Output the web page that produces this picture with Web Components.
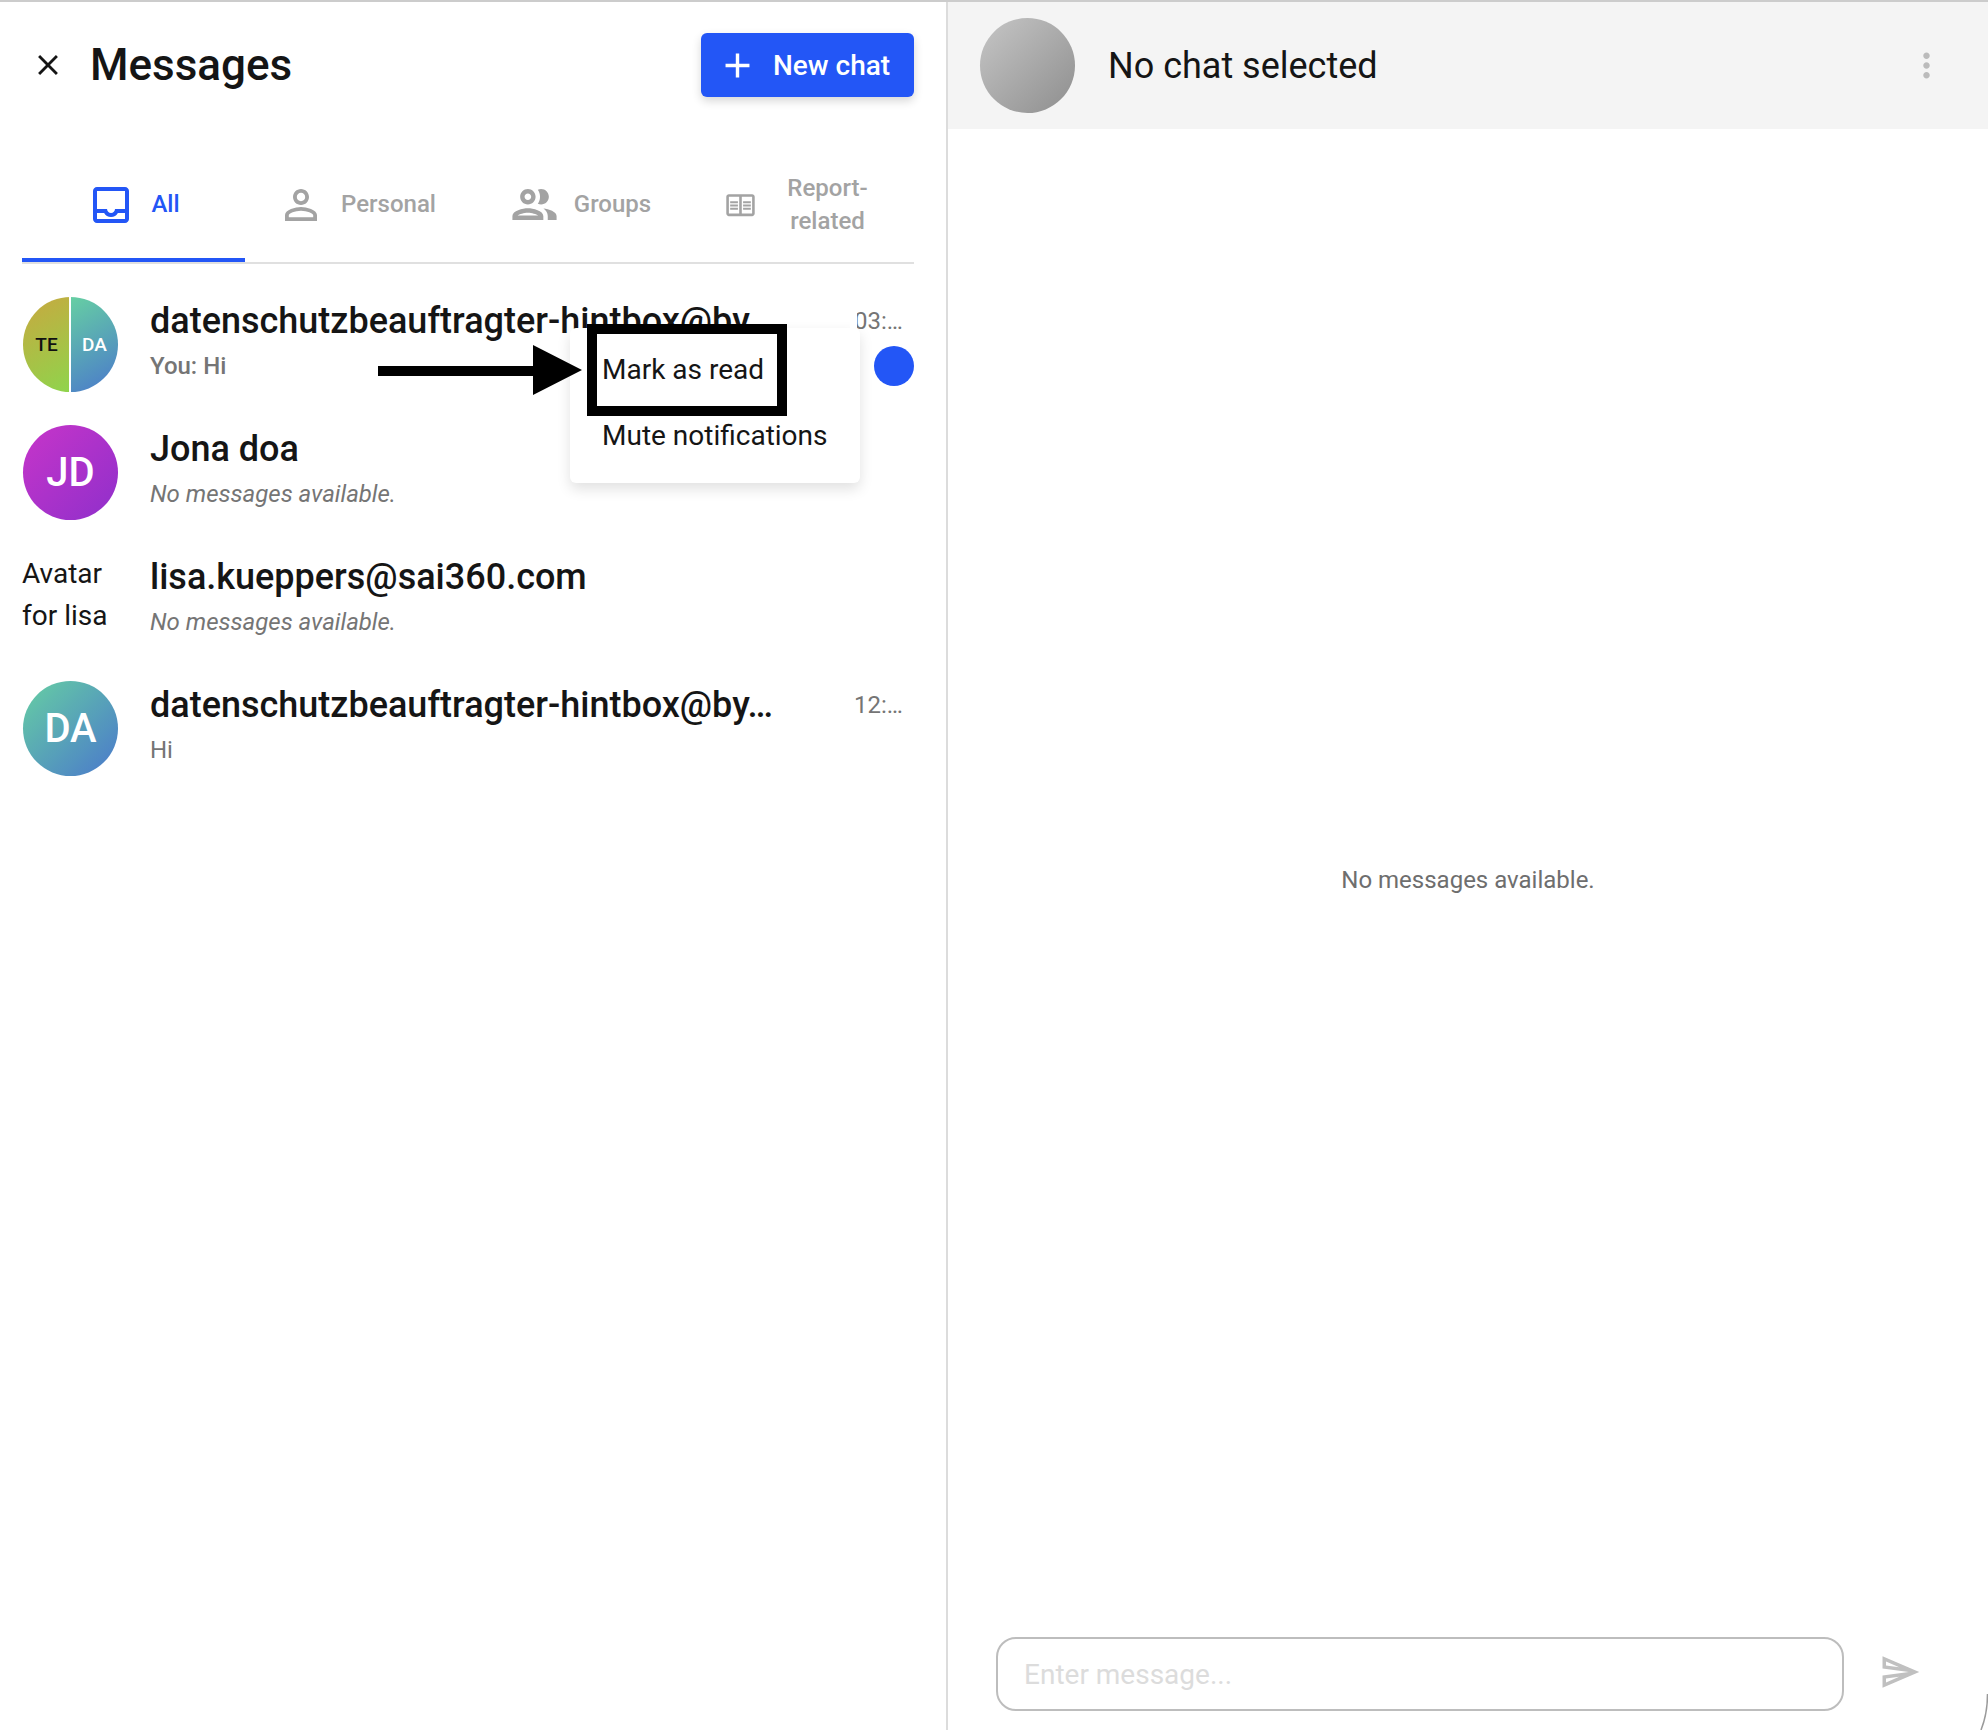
<!DOCTYPE html>
<html>
<head>
<meta charset="utf-8">
<style>
  html, body { margin: 0; height: 100%; background: #fff; }
  body { font-family: Roboto, "Liberation Sans", sans-serif; overflow: hidden; }
</style>
</head>
<body>
<chat-app>
  <chat-sidebar slot="left">
    <tab-item active label="All" size="48" d="M19 3H5c-1.1 0-2 .9-2 2v14c0 1.1.9 2 2 2h14c1.1 0 2-.9 2-2V5c0-1.1-.9-2-2-2zm0 16H5v-3h3.56c.69 1.19 1.97 2 3.45 2s2.75-.81 3.44-2H19v3zm0-5h-4.99c0 1.1-.9 2-2 2s-2-.9-2-2H5V5h14v9z" slot="tabs"></tab-item>
    <tab-item label="Personal" size="48" d="M12 5.9c1.16 0 2.1.94 2.1 2.1s-.94 2.1-2.1 2.1S9.9 9.16 9.9 8s.94-2.1 2.1-2.1m0 9c2.97 0 6.1 1.46 6.1 2.1v1.1H5.9V17c0-.64 3.13-2.1 6.1-2.1M12 4C9.79 4 8 5.79 8 8s1.79 4 4 4 4-1.79 4-4-1.79-4-4-4zm0 9c-2.67 0-8 1.34-8 4v3h16v-3c0-2.66-5.33-4-8-4z" slot="tabs"></tab-item>
    <tab-item label="Groups" size="53" d="M9 13.75c-2.34 0-7 1.17-7 3.5V19h14v-1.75c0-2.33-4.66-3.5-7-3.5zM4.34 17c.84-.58 2.87-1.25 4.66-1.25s3.82.67 4.66 1.25H4.34zM9 12c1.93 0 3.5-1.57 3.5-3.5S10.93 5 9 5 5.5 6.57 5.5 8.5 7.07 12 9 12zm0-5c.83 0 1.5.67 1.5 1.5S9.83 10 9 10s-1.5-.67-1.5-1.5S8.17 7 9 7zm7.04 6.81c1.16.84 1.96 1.96 1.96 3.44V19h4v-1.75c0-2.02-3.5-3.17-5.96-3.44zM15 12c1.93 0 3.5-1.57 3.5-3.5S16.93 5 15 5c-.54 0-1.04.13-1.5.35.63.89 1 1.98 1 3.15s-.37 2.26-1 3.15c.46.22.96.35 1.5.35z" slot="tabs"></tab-item>
    <tab-item label="Report-related" size="31" d="M21 4H3c-1.1 0-2 .9-2 2v13c0 1.1.9 2 2 2h18c1.1 0 2-.9 2-2V6c0-1.1-.9-2-2-2zM3 19V6h8v13H3zm18 0h-8V6h8v13zm-7-9.5h6V11h-6zm0 2.5h6v1.5h-6zm0 2.5h6V16h-6zM4 9.5h6V11H4zm0 2.5h6v1.5H4zm0 2.5h6V16H4z" slot="tabs"></tab-item>

    <chat-row slot="rows" name="datenschutzbeauftragter-hintbox@by…" sub="You: Hi" time="03:…" unread bold-sub>
      <chat-avatar slot="avatar" split></chat-avatar>
    </chat-row>
    <chat-row slot="rows" name="Jona doa" sub="No messages available." empty>
      <chat-avatar slot="avatar" initials="JD" colors="#c735c9,#8f2fcb"></chat-avatar>
    </chat-row>
    <chat-row slot="rows" name="lisa.kueppers@sai360.com" sub="No messages available." empty>
      <chat-avatar slot="avatar" alt="Avatar for lisa"></chat-avatar>
    </chat-row>
    <chat-row slot="rows" name="datenschutzbeauftragter-hintbox@by…" sub="Hi" time="12:…">
      <chat-avatar slot="avatar" initials="DA" colors="#66cfa3,#4a78cc"></chat-avatar>
    </chat-row>

    <row-menu slot="overlay"></row-menu>
    <menu-callout slot="overlay"></menu-callout>
  </chat-sidebar>
  <chat-panel slot="right"></chat-panel>
</chat-app>

<script>
class ChatApp extends HTMLElement {
  constructor() {
    super();
    this.attachShadow({ mode: 'open' });
    this.shadowRoot.innerHTML = `
      <style>
        :host { display: grid; grid-template-columns: 946px 1fr; height: 1730px; border-top: 2px solid #ccc; box-sizing: border-box; position: relative; }
        .corner { position: absolute; right: 0; bottom: 0; }
      </style>
      <slot name="left"></slot>
      <slot name="right"></slot>
      <svg class="corner" width="8" height="36" viewBox="0 0 8 36"><path d="M7.5 0C7.5 14 5 26 1 36" fill="none" stroke="#9a9a9a" stroke-width="1.5"/></svg>`;
  }
}

class ChatSidebar extends HTMLElement {
  constructor() {
    super();
    this.attachShadow({ mode: 'open' });
    this.shadowRoot.innerHTML = `
      <style>
        :host { display: block; position: relative; color: #151515; }
        header { display: flex; align-items: center; height: 127px; padding: 0 32px 1px 31px; box-sizing: border-box; }
        .close { width: 34px; height: 34px; fill: #151515; display: block; margin-right: 25px; }
        h1 { font-size: 44px; font-weight: 500; margin: 0; flex: 1; }
        button { display: flex; align-items: center; gap: 15px; height: 64px; width: 213px; box-sizing: border-box; padding: 0 0 0 16px; border: 0; border-radius: 6px; background: #2356f6; color: #fff; font: 500 28px Roboto, sans-serif; box-shadow: 0 4px 10px rgba(0,0,0,.16); }
        button svg { width: 41px; height: 41px; fill: #fff; }
        nav { display: grid; grid-template-columns: repeat(4, 1fr); margin: 0 32px 0 22px; height: 135px; border-bottom: 2px solid #e0e0e0; box-sizing: border-box; }
        .rows { padding: 28px 32px 0 23px; }
      </style>
      <header>
        <svg class="close" viewBox="0 0 24 24"><path d="M19 6.41L17.59 5 12 10.59 6.41 5 5 6.41 10.59 12 5 17.59 6.41 19 12 13.41 17.59 19 19 17.59 13.41 12z"/></svg>
        <h1>Messages</h1>
        <button><svg viewBox="0 0 24 24"><path d="M19 13h-6v6h-2v-6H5v-2h6V5h2v6h6v2z"/></svg>New chat</button>
      </header>
      <nav><slot name="tabs"></slot></nav>
      <div class="rows"><slot name="rows"></slot></div>
      <slot name="overlay"></slot>`;
  }
}

class TabItem extends HTMLElement {
  constructor() {
    super();
    this.attachShadow({ mode: 'open' });
    const size = this.getAttribute('size');
    this.shadowRoot.innerHTML = `
      <style>
        :host { display: flex; align-items: center; justify-content: center; gap: 16px; font-size: 24px; font-weight: 500; line-height: 33px; color: #a3a3a3; height: 133px; box-sizing: border-box; padding-top: 18px; text-align: center; }
        :host([active]) { color: #2356f6; border-bottom: 4px solid #2356f6; padding-top: 22px; }
        svg { fill: currentColor; flex: none; }
        :host([label="Groups"]) { gap: 13px; }
        :host([label^="Report"]) { gap: 22px; padding-right: 3px; }
        :host([label^="Report"]) span { width: 100px; }
      </style>
      <svg width="${size}" height="${size}" viewBox="0 0 24 24"><path d="${this.getAttribute('d')}"/></svg>
      <span>${this.getAttribute('label')}</span>`;
  }
}

class ChatAvatar extends HTMLElement {
  constructor() {
    super();
    this.attachShadow({ mode: 'open' });
    const alt = this.getAttribute('alt');
    const initials = this.getAttribute('initials');
    const colors = (this.getAttribute('colors') || '#ccc,#999').split(',');
    let inner = '';
    if (this.hasAttribute('split')) {
      inner = `<div class="split"><i class="te">TE</i><i class="da">DA</i></div>`;
    } else if (alt) {
      inner = `<div class="alt">${alt}</div>`;
    } else {
      inner = `<div class="round" style="background:linear-gradient(135deg,${colors[0]},${colors[1]})">${initials || ''}</div>`;
    }
    this.shadowRoot.innerHTML = `
      <style>
        :host { display: block; width: 95px; height: 95px; flex: none; }
        .round { width: 95px; height: 95px; border-radius: 50%; color: #fff; font-size: 40px; font-weight: 500; display: flex; align-items: center; justify-content: center; }
        .alt { font-size: 28px; line-height: 42px; color: #151515; margin-left: -1px; }
        .split { width: 95px; height: 95px; border-radius: 50%; overflow: hidden; display: grid; grid-template-columns: 46px 47px; gap: 2px; background: #fff; }
        i { font-style: normal; font-size: 19px; font-weight: 500; display: flex; align-items: center; justify-content: center; }
        .te { background: linear-gradient(150deg,#c9a83f,#8fd44c); color: #111; padding-left: 1px; }
        .da { background: linear-gradient(150deg,#66cfa3,#4a78cc); color: #fff; }
      </style>${inner}`;
  }
}

class ChatRow extends HTMLElement {
  constructor() {
    super();
    this.attachShadow({ mode: 'open' });
    const time = this.getAttribute('time');
    this.shadowRoot.innerHTML = `
      <style>
        :host { display: flex; gap: 32px; height: 128px; align-items: flex-start; padding-top: 4px; box-sizing: border-box; }
        ::slotted([slot="avatar"]) { margin-top: 1px; }
        .body { flex: 1; min-width: 0; }
        .top { display: flex; justify-content: space-between; gap: 20px; height: 50px; align-items: center; }
        .name { font-size: 36px; font-weight: 500; white-space: nowrap; }
        .time { font-size: 24px; color: #757575; width: 60px; white-space: nowrap; }
        .bottom { display: flex; justify-content: space-between; align-items: center; height: 40px; }
        .sub { font-size: 24px; color: #757575; }
        :host([bold-sub]) .sub { font-weight: 500; }
        :host([empty]) .sub { font-style: italic; }
        .dot { width: 40px; height: 40px; border-radius: 50%; background: #2356f6; }
      </style>
      <slot name="avatar"></slot>
      <div class="body">
        <div class="top">
          <div class="name">${this.getAttribute('name')}</div>
          ${time ? `<div class="time">${time}</div>` : ''}
        </div>
        <div class="bottom">
          <div class="sub">${this.getAttribute('sub')}</div>
          ${this.hasAttribute('unread') ? '<div class="dot"></div>' : ''}
        </div>
      </div>`;
  }
}

// context menu sits over the first row
class RowMenu extends HTMLElement {
  constructor() {
    super();
    this.attachShadow({ mode: 'open' });
    this.shadowRoot.innerHTML = `
      <style>
        :host { display: block; position: absolute; left: 570px; top: 326px; width: 290px; height: 155px; background: #fff; border-radius: 6px; box-shadow: 0 6px 14px rgba(0,0,0,.12); font-size: 28px; color: #151515; box-sizing: border-box; padding: 25px 0 0 33px; }
        /* the sliver that eats the left of the time in the reference */
        :host::before { content: ""; position: absolute; left: 280px; top: -30px; width: 7px; height: 30px; background: #fff; }
        div { height: 66px; line-height: 34px; white-space: nowrap; margin-left: -1px; }
      </style>
      <div>Mark as read</div>
      <div>Mute notifications</div>`;
  }
}

// annotation drawn on the screenshot: black frame + arrow
class MenuCallout extends HTMLElement {
  constructor() {
    super();
    this.attachShadow({ mode: 'open' });
    this.shadowRoot.innerHTML = `
      <style>
        :host { display: block; position: absolute; left: 378px; top: 322px; width: 409px; height: 92px; pointer-events: none; }
        .frame { position: absolute; right: 0; top: 0; width: 200px; height: 92px; border: 10px solid #000; box-sizing: border-box; }
        svg { position: absolute; left: 0; top: 21px; }
      </style>
      <svg width="206" height="50" viewBox="0 0 206 50"><path d="M0 21h155V0l49 25-49 25V31H0z" fill="#000"/></svg>
      <div class="frame"></div>`;
  }
}

class ChatPanel extends HTMLElement {
  constructor() {
    super();
    this.attachShadow({ mode: 'open' });
    this.shadowRoot.innerHTML = `
      <style>
        :host { display: flex; flex-direction: column; border-left: 2px solid #dcdcdc; color: #151515; min-width: 0; }
        header { display: flex; align-items: center; height: 127px; background: #f4f4f4; padding: 0 42px 0 32px; gap: 33px; flex: none; }
        .title { flex: 1; font-size: 36px; }
        header svg { width: 39px; height: 39px; fill: #bbb; }
        .msgs { flex: 1; display: flex; align-items: center; justify-content: center; font-size: 24px; color: #6e6e6e; padding-bottom: 7px; }
        footer { display: flex; align-items: center; padding: 0 67px 19px 48px; gap: 35px; flex: none; }
        .input { flex: 1; height: 74px; box-sizing: border-box; border: 2px solid #bdbdbd; border-radius: 20px; padding: 0 26px; font-size: 28px; color: #dcdcdc; display: flex; align-items: center; }
        footer svg { width: 42px; height: 42px; fill: #c0c0c0; flex: none; margin-top: -4px; }
      </style>
      <header>
        <chat-avatar colors="#c6c6c6,#8e8e8e"></chat-avatar>
        <div class="title">No chat selected</div>
        <svg viewBox="0 0 24 24"><path d="M12 8c1.1 0 2-.9 2-2s-.9-2-2-2-2 .9-2 2 .9 2 2 2zm0 2c-1.1 0-2 .9-2 2s.9 2 2 2 2-.9 2-2-.9-2-2-2zm0 6c-1.1 0-2 .9-2 2s.9 2 2 2 2-.9 2-2-.9-2-2-2z"/></svg>
      </header>
      <div class="msgs">No messages available.</div>
      <footer>
        <div class="input">Enter message...</div>
        <svg viewBox="0 0 24 24"><path d="M4.01 6.03l7.51 3.22-7.52-1 .01-2.22m7.5 8.72L4 17.97v-2.22l7.51-1M2.01 3L2 10l15 2-15 2 .01 7L23 12 2.01 3z"/></svg>
      </footer>`;
  }
}

customElements.define('chat-avatar', ChatAvatar);
customElements.define('tab-item', TabItem);
customElements.define('chat-row', ChatRow);
customElements.define('row-menu', RowMenu);
customElements.define('menu-callout', MenuCallout);
customElements.define('chat-sidebar', ChatSidebar);
customElements.define('chat-panel', ChatPanel);
customElements.define('chat-app', ChatApp);
</script>
</body>
</html>
